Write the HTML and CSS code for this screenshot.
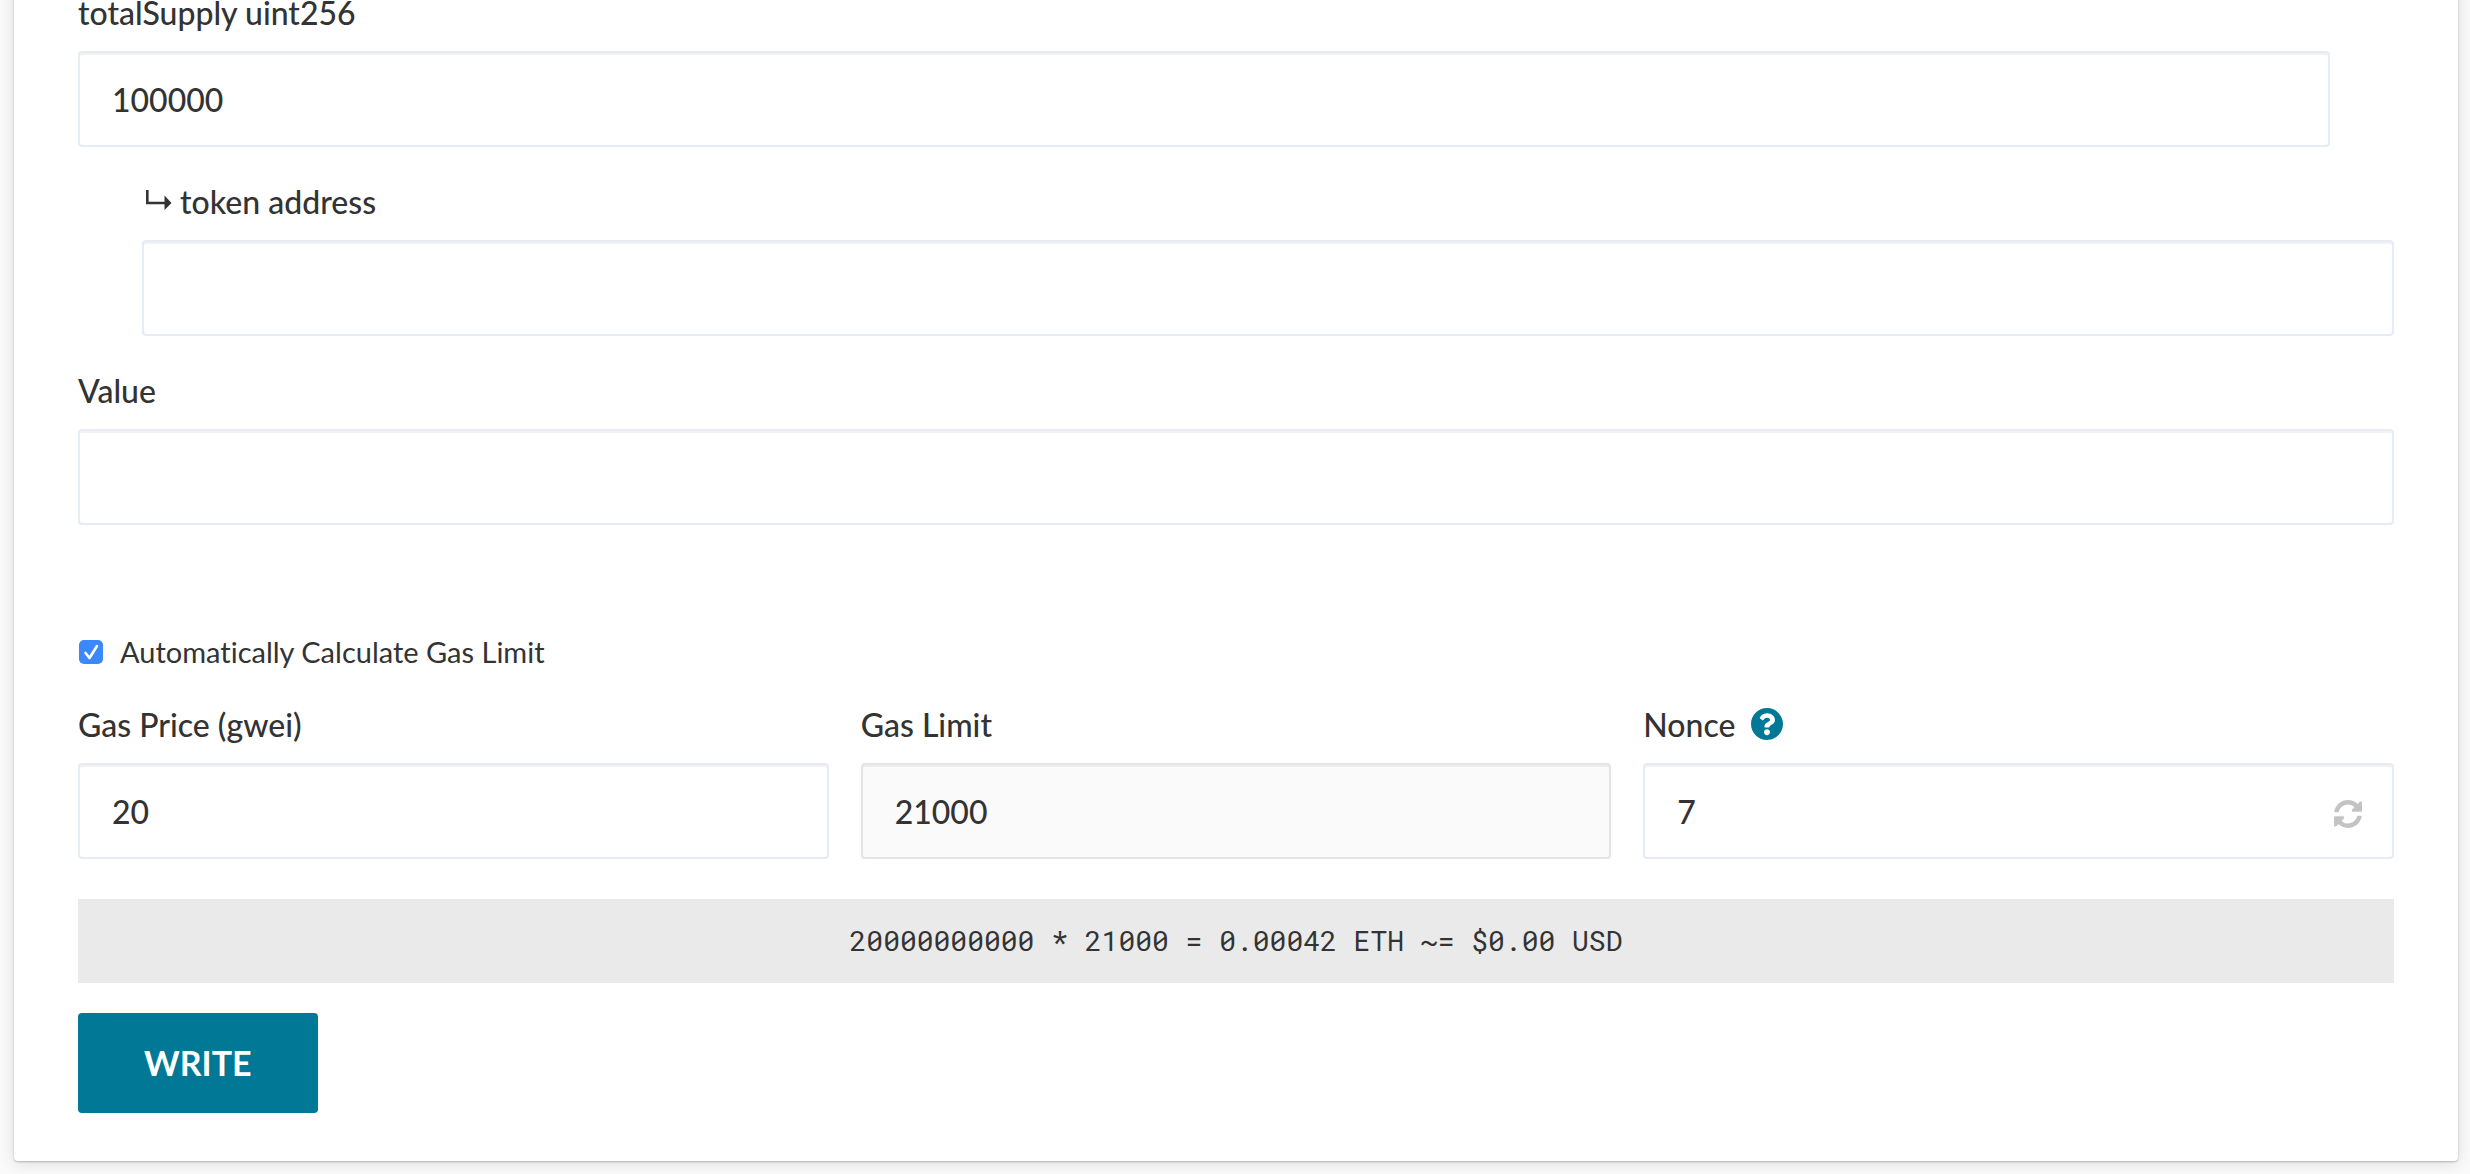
FILE: index.html
```html
<!DOCTYPE html>
<html lang="en">
<head>
<meta charset="utf-8">
<title>Write contract</title>
<link rel="stylesheet" href="styles.css">
</head>
<body>
<main class="card">
  <form class="form">
    <div class="field field-outer">
      <label class="label" for="supply">totalSupply uint256</label>
      <input class="input" id="supply" type="text" value="100000">
    </div>
    <div class="field field-nested">
      <label class="label" for="token">
        <svg class="branch" viewBox="0 0 26 20" aria-hidden="true"><path d="M0 0h2.600v11.700H18.500V5.500L25.500 13 18.500 20v-5.700H0z"/></svg>
        token address
      </label>
      <input class="input" id="token" type="text">
    </div>
    <div class="field">
      <label class="label" for="value">Value</label>
      <input class="input" id="value" type="text">
    </div>

    <label class="check-row"><input class="check" type="checkbox" checked>Automatically Calculate Gas Limit</label>

    <div class="gas-grid">
      <div>
        <label class="label" for="price">Gas Price (gwei)</label>
        <input class="input" id="price" type="text" value="20">
      </div>
      <div>
        <label class="label" for="limit">Gas Limit</label>
        <input class="input" id="limit" type="text" value="21000" disabled>
      </div>
      <div>
        <div class="label-row">
          <label class="label" for="nonce">Nonce</label>
          <button class="icon-button help" type="button" aria-label="About the nonce">
            <svg viewBox="8 8 496 496" aria-hidden="true"><path d="M504 256c0 136.997-111.043 248-248 248S8 392.997 8 256C8 119.083 119.043 8 256 8s248 111.083 248 248zM262.655 90c-54.497 0-89.255 22.957-116.549 63.758-3.536 5.286-2.353 12.415 2.715 16.258l34.699 26.31c5.205 3.947 12.621 3.008 16.665-2.122 17.864-22.658 30.113-35.797 57.303-35.797 20.429 0 45.698 13.148 45.698 32.958 0 14.976-12.363 22.667-32.534 33.976C247.128 238.528 216 254.941 216 296v4c0 6.627 5.373 12 12 12h56c6.627 0 12-5.373 12-12v-1.333c0-28.462 83.186-29.647 83.186-106.667 0-58.002-60.165-102-116.531-102zM256 338c-25.365 0-46 20.635-46 46 0 25.364 20.635 46 46 46s46-20.636 46-46c0-25.365-20.635-46-46-46z"/></svg>
          </button>
        </div>
        <div class="input-wrap">
          <input class="input" id="nonce" type="text" value="7">
          <button class="icon-button refresh" type="button" aria-label="Refresh nonce">
            <svg viewBox="8 8 496 496" aria-hidden="true"><path d="M370.72 133.28C339.458 104.008 298.888 87.962 255.848 88c-77.458.068-144.328 53.178-162.791 126.85-1.344 5.363-6.122 9.15-11.651 9.15H24.103c-7.498 0-13.194-6.807-11.807-14.176C33.933 94.924 134.813 8 256 8c66.448 0 126.791 26.136 171.315 68.685L463.03 40.97C478.149 25.851 504 36.559 504 57.941V192c0 13.255-10.745 24-24 24H345.941c-21.382 0-32.09-25.851-16.971-40.971l41.75-41.749zM32 296h134.059c21.382 0 32.09 25.851 16.971 40.971l-41.75 41.75c31.262 29.273 71.835 45.319 114.876 45.28 77.418-.07 144.315-53.144 162.787-126.849 1.344-5.363 6.122-9.15 11.651-9.15h57.304c7.498 0 13.194 6.807 11.807 14.176C478.067 417.076 377.187 504 256 504c-66.448 0-126.791-26.136-171.315-68.685L48.97 471.03C33.851 486.149 8 475.441 8 454.059V320c0-13.255 10.745-24 24-24z"/></svg>
          </button>
        </div>
      </div>
    </div>

    <output class="summary">20000000000 * 21000 = 0.00042 ETH ~= $0.00 USD</output>
    <button class="submit" type="button">WRITE</button>
  </form>
</main>
</body>
</html>
```
FILE: styles.css
```css
* {
  box-sizing: border-box;
}

body {
  margin: 0;
  background: #fafafa;
  color: #333;
  font: 500 32px/48px Lato, "Open Sans", sans-serif;
}

/* The card starts above the fold of the scrolled view */
.card {
  margin: -77px 12px 13px 14px;
  padding: 64px 64px 48px;
  background: #fff;
  border-radius: 4px;
  box-shadow: 0 1px 2px rgba(0, 0, 0, 0.24), 0 2px 16px rgba(0, 0, 0, 0.12);
}

.form {
  display: flex;
  flex-direction: column;
}

.field {
  margin-bottom: 29px;
}

.field-outer {
  margin-right: 64px;
}

.field-nested {
  margin-left: 64px;
}

.label {
  display: block;
  margin-bottom: 12px;
  line-height: 52px;
}

.branch {
  width: 26px;
  height: 20px;
  margin-left: 4px;
  vertical-align: 4px;
  fill: currentColor;
}

.input {
  display: block;
  width: 100%;
  height: 96px;
  padding: 0 32px;
  border: 2px solid #e6ecf5;
  border-radius: 4px;
  background: #fff;
  box-shadow: inset 0 2px 0 rgba(0, 0, 0, 0.05);
  color: #333;
  font: inherit;
}

.input:disabled {
  background: #fafafa;
  border-color: #e4e4e4;
}

.check-row {
  display: flex;
  align-items: center;
  align-self: flex-start;
  gap: 17px;
  margin: 71px 0 20px 1px;
  font-size: 29px;
  font-weight: 400;
  font-variant-ligatures: none;
  line-height: 54px;
}

.check {
  appearance: none;
  width: 24px;
  height: 24px;
  margin: 0;
  border-radius: 5px;
  background: #3b88fd url("data:image/svg+xml,%3Csvg xmlns='http://www.w3.org/2000/svg' viewBox='0 0 24 24'%3E%3Cpath d='M6.500 13l4 5L18 6' fill='none' stroke='white' stroke-width='2.600' stroke-linecap='round' stroke-linejoin='round'/%3E%3C/svg%3E") center / contain;
}

.gas-grid {
  display: grid;
  grid-template-columns: repeat(3, 1fr);
  gap: 32px;
}

.label-row {
  display: flex;
  gap: 16px;
}

.icon-button {
  padding: 0;
  border: 0;
  background: none;
}

.icon-button svg {
  display: block;
  width: 100%;
  fill: currentColor;
}

.help {
  width: 32px;
  height: 32px;
  margin-top: 9px;
  color: #007896;
}

.input-wrap {
  position: relative;
}

.refresh {
  position: absolute;
  top: 37px;
  right: 32px;
  width: 28px;
  height: 28px;
  color: #c3c3c3;
}

.summary {
  margin: 40px 0 30px;
  padding: 18px 32px;
  background: #eaeaea;
  font-family: "Roboto Mono", "Liberation Mono", monospace;
  font-size: 28px;
  font-weight: 400;
  text-align: center;
}

.submit {
  align-self: flex-start;
  padding: 26px 66px;
  border: 0;
  border-radius: 4px;
  background: #007896;
  color: #fff;
  font: 700 34px/48px Lato, "Open Sans", sans-serif;
}
```
